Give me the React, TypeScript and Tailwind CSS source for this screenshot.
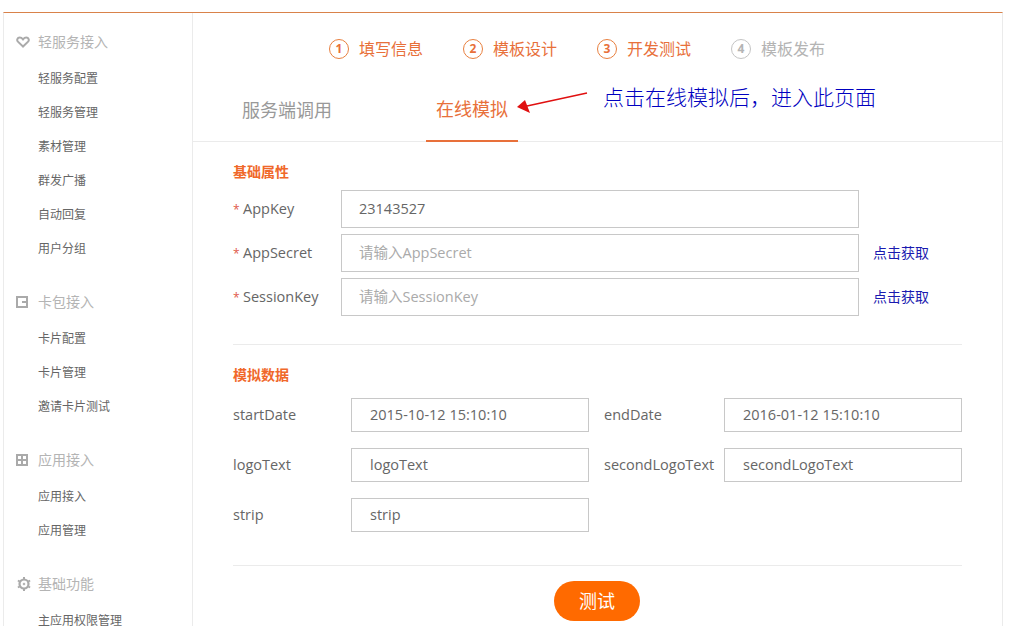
import { ReactNode } from "react";

const font = "font-['Open_Sans','Noto_Sans_CJK_SC',sans-serif]";

const menu = [
  { title: "轻服务接入", icon: "heart", items: ["轻服务配置", "轻服务管理", "素材管理", "群发广播", "自动回复", "用户分组"] },
  { title: "卡包接入", icon: "card", items: ["卡片配置", "卡片管理", "邀请卡片测试"] },
  { title: "应用接入", icon: "grid", items: ["应用接入", "应用管理"] },
  { title: "基础功能", icon: "gear", items: ["主应用权限管理"] },
];

function MenuIcon({ name }: { name: string }) {
  if (name === "heart")
    return (
      <svg width="14" height="12" viewBox="0 0 14 12" fill="none" stroke="#aaa" strokeWidth="2">
        <path d="M7 10.5 1.9 5.6C.5 4.2 1.3 1.5 3.7 1.5c1.500 0 2.500.8 3.300 1.800.8-1 1.800-1.800 3.300-1.800 2.400 0 3.200 2.700 1.800 4.100z" />
      </svg>
    );
  if (name === "card")
    return (
      <svg width="12" height="12" viewBox="0 0 12 12">
        <path fill="#aaa" fillRule="evenodd" d="M0 0h12v12H0zM2 2v8h8V7H6V5h4V2z" />
      </svg>
    );
  if (name === "grid")
    return (
      <svg width="12" height="12" viewBox="0 0 12 12">
        <path fill="#aaa" fillRule="evenodd" d="M0 0h12v12H0zM2 2v3h3V2zm5 0v3h3V2zM2 7v3h3V7zm5 0v3h3V7z" />
      </svg>
    );
  return (
    <svg className="ml-[1px]" width="14" height="14" viewBox="0 0 14 14" fill="none" stroke="#aaa">
      <circle cx="7" cy="7" r="4.500" strokeWidth="2.200" />
      <circle cx="7" cy="7" r="1" fill="#aaa" strokeWidth="0.500" />
      <path strokeWidth="2" d="M7 0v2M7 12v2M0.900 3.500l1.700 1M11.400 9.500l1.700 1M0.900 10.500l1.700-1M11.400 4.500l1.700-1" />
    </svg>
  );
}

function Sidebar() {
  return (
    <aside className="w-[189px] shrink-0 border-r border-[#ebebeb] pt-[17px]">
      {menu.map((group) => (
        <div key={group.title} className="mb-[24px]">
          <div className="flex h-[24px] items-center text-[14px] text-[#b4b4b4]">
            <span className="flex w-[34px] pl-[12px]">
              <MenuIcon name={group.icon} />
            </span>
            <span className="pb-[2px]">{group.title}</span>
          </div>
          <ul className="mt-[8px]">
            {group.items.map((item) => (
              <li key={item} className="flex h-[34px] items-center pl-[34px] text-[12px] text-[#666]">
                {item}
              </li>
            ))}
          </ul>
        </div>
      ))}
    </aside>
  );
}

function Step({ n, label, active = true, className = "" }: { n: number; label: string; active?: boolean; className?: string }) {
  const color = active ? "text-[#e8703a] border-[#e8803f]" : "text-[#b4b4b4] border-[#c4c4c4]";
  return (
    <div className={`flex items-center gap-[10px] ${className}`}>
      <span className={`flex h-[20px] w-[20px] items-center justify-center rounded-full border text-[12px] font-bold ${color}`}>{n}</span>
      <span className={`text-[16px] ${active ? "text-[#e8703a]" : "text-[#b4b4b4]"}`}>{label}</span>
    </div>
  );
}

function Field({ value, placeholder, className = "" }: { value?: string; placeholder?: string; className?: string }) {
  return (
    <div className={`flex items-center border border-[#c8c8c8] text-[14.5px] ${value ? "text-[#666]" : "text-[#aaa]"} ${className}`}>
      {value ?? placeholder}
    </div>
  );
}

function KeyRow({ label, value, placeholder, fetch }: { label: string; value?: string; placeholder?: string; fetch?: boolean }) {
  return (
    <div className="flex h-[38px] items-center">
      <span className="w-[108px] text-[14.5px] text-[#666]">
        <span className="inline-block w-[10px] text-[12px] text-[#e05a4a]">*</span>
        {label}
      </span>
      <Field value={value} placeholder={placeholder} className="h-[38px] w-[518px] pl-[17px]" />
      {fetch && <a className="ml-[14px] pb-[2px] text-[14px] text-[#1a1ab0]">点击获取</a>}
    </div>
  );
}

function DataCell({ label, value, labelWidth }: { label: string; value: string; labelWidth: string }) {
  return (
    <div className="flex items-center">
      <span className={`whitespace-nowrap text-[14.5px] text-[#666] ${labelWidth}`}>{label}</span>
      <Field value={value} className="h-[34px] w-[238px] pl-[18px]" />
    </div>
  );
}

function SectionTitle({ children }: { children: ReactNode }) {
  return <h2 className="text-[14px] leading-[20px] font-bold text-[#f0682a]">{children}</h2>;
}

export default function App() {
  return (
    <div className={`h-[626px] w-[1010px] overflow-hidden bg-white pt-3 pl-[3px] ${font}`}>
      <div className="flex h-[614px] w-[1000px] border-x border-t border-x-[#ebebeb] border-t-[#d9824a]">
        <Sidebar />
        <main className="relative flex-1">
          <div className="flex h-[71px] items-center pl-[136px]">
            <Step n={1} label="填写信息" className="mr-[40px]" />
            <Step n={2} label="模板设计" className="mr-[40px]" />
            <Step n={3} label="开发测试" className="mr-[40px]" />
            <Step n={4} label="模板发布" active={false} />
          </div>

          <div className="flex h-[58px] border-b border-[#ebebeb] pl-[49px] text-[18px]">
            <div className="flex h-[58px] w-[184px] items-center pb-[5px] text-[#999]">服务端调用</div>
            <div className="flex h-[58px] w-[92px] items-center justify-center border-b-2 border-[#e8703a] pb-[5px] text-[#e8703a]">在线模拟</div>
          </div>

          {/* annotation on top of the tabs */}
          <svg className="absolute left-[320px] top-[75px]" width="80" height="40" viewBox="0 0 80 40">
            <path d="M74 5 14 18" stroke="#e01010" strokeWidth="1.500" />
            <path d="M4 19 12 12l5 13z" fill="#e01010" />
          </svg>
          <div className="absolute left-[410px] top-[68px] font-['Noto_Sans_CJK_SC',serif] text-[21px] leading-[30px] font-light text-[#0000c0]">
            点击在线模拟后，进入此页面
          </div>

          <div className="px-[40px] pt-[20px]">
            <SectionTitle>基础属性</SectionTitle>
            <div className="mt-[8px] flex flex-col gap-[6px]">
              <KeyRow label="AppKey" value="23143527" />
              <KeyRow label="AppSecret" placeholder="请输入AppSecret" fetch />
              <KeyRow label="SessionKey" placeholder="请输入SessionKey" fetch />
            </div>

            <div className="mt-[28px] border-t border-[#ebebeb] pt-[20px]">
              <SectionTitle>模拟数据</SectionTitle>
              <div className="mt-[13px] grid grid-cols-[371px_auto] gap-y-[16px]">
                <DataCell label="startDate" value="2015-10-12 15:10:10" labelWidth="w-[118px]" />
                <DataCell label="endDate" value="2016-01-12 15:10:10" labelWidth="w-[120px]" />
                <DataCell label="logoText" value="logoText" labelWidth="w-[118px]" />
                <DataCell label="secondLogoText" value="secondLogoText" labelWidth="w-[120px]" />
                <DataCell label="strip" value="strip" labelWidth="w-[118px]" />
              </div>
            </div>

            <div className="mt-[33px] flex justify-center border-t border-[#ebebeb] pt-[15px]">
              <button className="mr-[1px] h-[40px] w-[86px] rounded-full bg-[#ff6a00] text-[18px] text-white">测试</button>
            </div>
          </div>
        </main>
      </div>
    </div>
  );
}
